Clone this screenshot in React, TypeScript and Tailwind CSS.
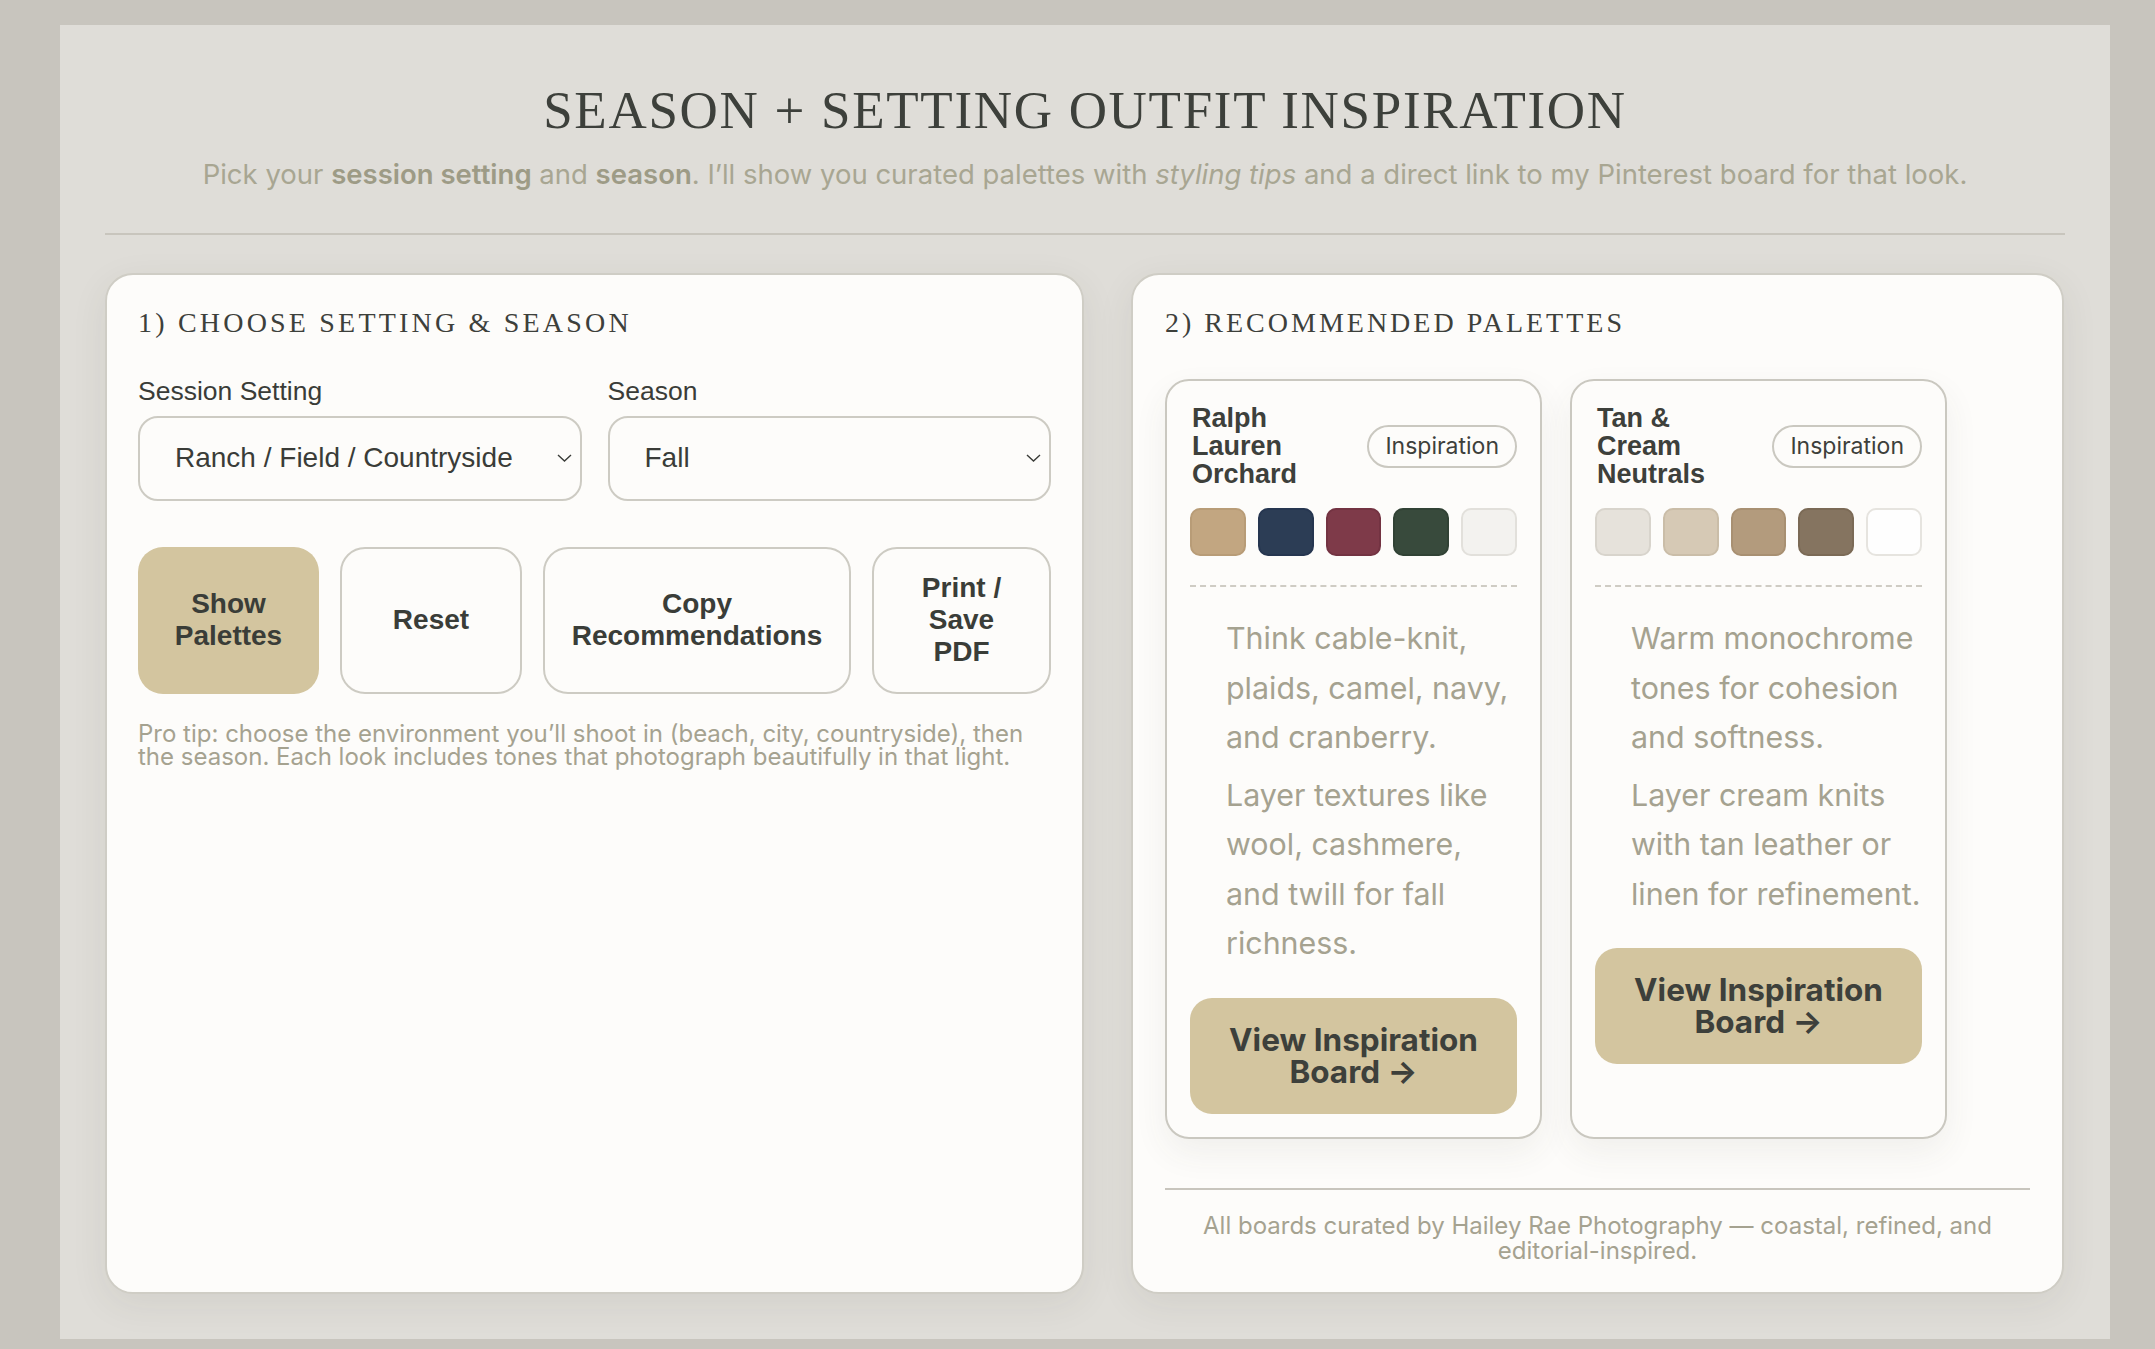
import React from "react";

type Swatch = { cls: string };
type Palette = { name: string; swatches: Swatch[]; tips: string[] };

const palettes: Palette[] = [
  {
    name: "Ralph Lauren Orchard",
    swatches: [
      { cls: "bg-[#c2a681] border-[#b89c77]" },
      { cls: "bg-[#2c3d55] border-[#263650]" },
      { cls: "bg-[#7e3a49] border-[#733342]" },
      { cls: "bg-[#384a3c] border-[#314235]" },
      { cls: "bg-[#f3f2ef] border-[#e2e0db]" },
    ],
    tips: [
      "Think cable-knit, plaids, camel, navy, and cranberry.",
      "Layer textures like wool, cashmere, and twill for fall richness.",
    ],
  },
  {
    name: "Tan & Cream Neutrals",
    swatches: [
      { cls: "bg-[#e6e2db] border-[#d8d4cc]" },
      { cls: "bg-[#d6c9b5] border-[#cabda8]" },
      { cls: "bg-[#b39b7d] border-[#a89072]" },
      { cls: "bg-[#857460] border-[#7b6a56]" },
      { cls: "bg-[#fefefe] border-[#e6e4df]" },
    ],
    tips: [
      "Warm monochrome tones for cohesion and softness.",
      "Layer cream knits with tan leather or linen for refinement.",
    ],
  },
];

function Chevron() {
  return (
    <svg width="15" height="9" viewBox="0 0 15 9" fill="none" className="pointer-events-none absolute right-[10px] top-1/2 -translate-y-1/2">
      <polyline points="1,1.5 7.5,7.5 14,1.5" stroke="#3a3c38" strokeWidth="1.4" fill="none" />
    </svg>
  );
}

function SelectField({ label, value, options }: { label: string; value: string; options: string[] }) {
  return (
    <div className="flex flex-col">
      <label className="font-['Liberation_Sans',Arial,sans-serif] text-[26.5px] leading-[30.5px] text-[#3a3c38]">{label}</label>
      <div className="relative mt-[9px]">
        <select
          defaultValue={value}
          className="block h-[85px] w-full appearance-none rounded-[20px] border-2 border-[#cdcbc3] bg-[#fdfcfa] pl-[35px] pr-[40px] font-['Liberation_Sans',Arial,sans-serif] text-[28px] text-[#3a3c38] outline-none"
        >
          {options.map((o) => (
            <option key={o}>{o}</option>
          ))}
        </select>
        <Chevron />
      </div>
    </div>
  );
}

function PaletteCard({ p }: { p: Palette }) {
  return (
    <div className="flex w-[377px] flex-col rounded-[24px] border-2 border-[#cac8c0] bg-[#fdfcfa] px-[23px] pb-[23px] pt-[23px] shadow-[0_14px_34px_rgba(70,65,50,0.07)]">
      <div className="flex items-center justify-between">
        <div className="w-[158px] pl-[2px] font-['Liberation_Sans',Arial,sans-serif] text-[27px] font-bold leading-[28px] text-[#3d403b]">{p.name}</div>
        <span className="shrink-0 rounded-full border-2 border-[#cac8c0] px-[16px] py-[5px] font-['Inter',sans-serif] text-[23px] leading-[29px] text-[#3d403b]">
          Inspiration
        </span>
      </div>
      <div className="mt-[20px] flex gap-[12px]">
        {p.swatches.map((s, i) => (
          <div key={i} className={"h-[48px] w-[56px] rounded-[10px] border-2 " + s.cls} />
        ))}
      </div>
      <div className="mt-[29px] border-t-2 border-dashed border-[#cfccc4]" />
      <div className="mt-[27px] pl-[36px] font-['Inter',sans-serif] text-[30.4px] leading-[49.5px] text-[#a5a290]">
        {p.tips.map((t, i) => (
          <p key={i} className={i > 0 ? "mt-[8px]" : ""}>
            {t}
          </p>
        ))}
      </div>
      <a className="mt-[29px] flex h-[116px] items-center justify-center rounded-[22px] bg-[#d3c59f] px-[24px] text-center font-['Inter',sans-serif] text-[31.5px] font-bold leading-[32px] text-[#3d403b]">
        View Inspiration Board →
      </a>
    </div>
  );
}

export default function App() {
  const btnBase =
    "flex h-[147px] items-center justify-center rounded-[25px] text-center font-['Liberation_Sans',Arial,sans-serif] text-[28px] font-bold leading-[32px] text-[#3a3d38]";
  return (
    <div className="min-h-screen bg-[#c8c5be] pt-[25px] pb-[11px] font-['Inter',sans-serif]">
      <div className="ml-[60px] w-[2050px] bg-[#dfddd8] px-[45px] pb-[45px] pt-[53px]">
        <h1 className="text-center font-['Liberation_Serif','Times_New_Roman',serif] text-[53px] font-normal leading-[64px] tracking-[1.7px] text-[#3d403b]">
          SEASON + SETTING OUTFIT INSPIRATION
        </h1>
        <p className="mt-[14px] text-center font-['Inter',sans-serif] text-[27.5px] leading-[36px] text-[#a8a692]">
          Pick your <b className="font-semibold text-[#9d9b86]">session setting</b> and{" "}
          <b className="font-semibold text-[#9d9b86]">season</b>. I’ll show you curated palettes with <i>styling tips</i> and a
          direct link to my Pinterest board for that look.
        </p>
        <div className="mt-[41px] h-[2px] bg-[#c8c5bd]" />

        <div className="mt-[38px] grid grid-cols-[979px_933px] gap-[47px]">
          {/* Left card */}
          <section className="rounded-[28px] border-2 border-[#cfcdc5] bg-[#fdfcfa] px-[31px] pt-[32px] pb-[29px] shadow-[0_10px_36px_rgba(70,65,50,0.08)]">
            <h2 className="font-['Liberation_Serif','Times_New_Roman',serif] text-[28px] font-normal leading-[32px] tracking-[3.2px] text-[#3d403b]">
              1) CHOOSE SETTING &amp; SEASON
            </h2>
            <div className="mt-[37px] grid grid-cols-2 gap-[26px]">
              <SelectField
                label="Session Setting"
                value="Ranch / Field / Countryside"
                options={["Beach / Coastal", "City / Urban", "Ranch / Field / Countryside", "Mountains / Forest"]}
              />
              <SelectField label="Season" value="Fall" options={["Spring", "Summer", "Fall", "Winter"]} />
            </div>
            <div className="mt-[46px] flex gap-[21px]">
              <button className={btnBase + " w-[181px] bg-[#d3c59f] px-[20px]"}>Show Palettes</button>
              <button className={btnBase + " w-[182px] border-2 border-[#cdcbc3] bg-[#fdfcfa] px-[20px]"}>Reset</button>
              <button className={btnBase + " w-[308px] border-2 border-[#cdcbc3] bg-[#fdfcfa] px-[20px]"}>Copy Recommendations</button>
              <button className={btnBase + " w-[179px] border-2 border-[#cdcbc3] bg-[#fdfcfa] px-[27px]"}>Print / Save PDF</button>
            </div>
            <p className="mt-[28px] font-['Inter',sans-serif] text-[24px] leading-[23px] text-[#a5a290]">
              Pro tip: choose the environment you’ll shoot in (beach, city, countryside), then the season. Each look includes tones
              that photograph beautifully in that light.
            </p>
          </section>

          {/* Right card */}
          <section className="rounded-[28px] border-2 border-[#cfcdc5] bg-[#fdfcfa] px-[32px] pt-[32px] pb-[29px] shadow-[0_10px_36px_rgba(70,65,50,0.08)]">
            <h2 className="font-['Liberation_Serif','Times_New_Roman',serif] text-[28px] font-normal leading-[32px] tracking-[3px] text-[#3d403b]">
              2) RECOMMENDED PALETTES
            </h2>
            <div className="mt-[40px] flex gap-[28px]">
              {palettes.map((p) => (
                <PaletteCard key={p.name} p={p} />
              ))}
            </div>
            <div className="mt-[49px] h-[2px] bg-[#c8c5bd]" />
            <p className="mt-[23px] text-center font-['Inter',sans-serif] text-[24px] leading-[25px] text-[#a5a290]">
              All boards curated by Hailey Rae Photography — coastal, refined, and editorial-inspired.
            </p>
          </section>
        </div>
      </div>
    </div>
  );
}
